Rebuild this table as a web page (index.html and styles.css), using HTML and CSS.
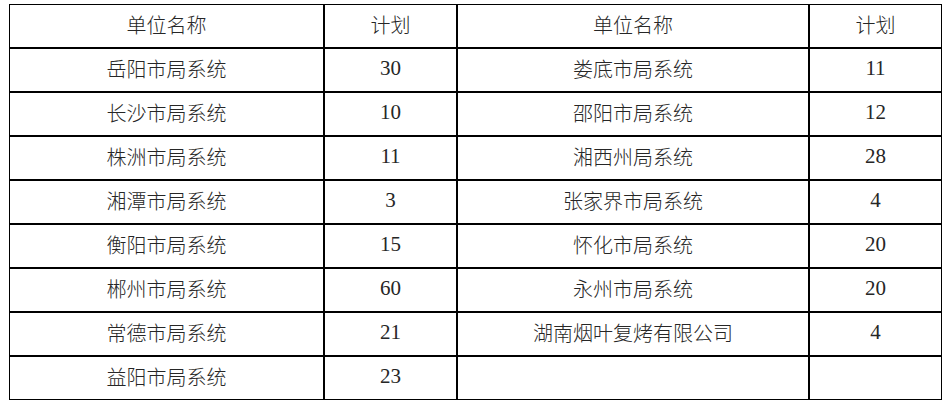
FILE: index.html
```html
<!DOCTYPE html>
<html lang="zh-CN">
<head>
<meta charset="utf-8">
<title>单位计划表</title>
<link rel="stylesheet" href="styles.css">
</head>
<body>
<div class="plan-table">
  <div class="cell head">单位名称</div><div class="cell head">计划</div><div class="cell head">单位名称</div><div class="cell head">计划</div>
  <div class="cell name">岳阳市局系统</div><div class="cell num">30</div><div class="cell name">娄底市局系统</div><div class="cell num">11</div>
  <div class="cell name">长沙市局系统</div><div class="cell num">10</div><div class="cell name">邵阳市局系统</div><div class="cell num">12</div>
  <div class="cell name">株洲市局系统</div><div class="cell num">11</div><div class="cell name">湘西州局系统</div><div class="cell num">28</div>
  <div class="cell name">湘潭市局系统</div><div class="cell num">3</div><div class="cell name">张家界市局系统</div><div class="cell num">4</div>
  <div class="cell name">衡阳市局系统</div><div class="cell num">15</div><div class="cell name">怀化市局系统</div><div class="cell num">20</div>
  <div class="cell name">郴州市局系统</div><div class="cell num">60</div><div class="cell name">永州市局系统</div><div class="cell num">20</div>
  <div class="cell name">常德市局系统</div><div class="cell num">21</div><div class="cell name">湖南烟叶复烤有限公司</div><div class="cell num">4</div>
  <div class="cell name">益阳市局系统</div><div class="cell num">23</div><div class="cell name"></div><div class="cell num"></div>
</div>
</body>
</html>
```

FILE: styles.css
```css
html, body {
  margin: 0;
  padding: 0;
  background: #ffffff;
}

body {
  width: 949px;
  height: 403px;
  overflow: hidden;
}

.plan-table {
  margin: 4px 0 0 9px;
  display: grid;
  grid-template-columns: 313px 131px 350px 131px;
  grid-auto-rows: 42px;
  gap: 2px;
  padding: 1px;
  width: max-content;
  background: #000000;
}

.cell {
  background: #ffffff;
  display: flex;
  align-items: center;
  justify-content: center;
  color: #262626;
  font-size: 20px;
  line-height: 1;
  padding-bottom: 3px;
  box-sizing: border-box;
}

.head,
.name {
  font-family: "Noto Sans CJK SC", "Noto Sans", sans-serif;
  font-weight: 300;
}

.num {
  font-family: "Liberation Serif", "Noto Sans CJK SC", serif;
  font-size: 21px;
}

.head:nth-child(2),
.head:nth-child(4) {
  font-family: "Noto Sans CJK SC", sans-serif;
  font-size: 20px;
}
```
